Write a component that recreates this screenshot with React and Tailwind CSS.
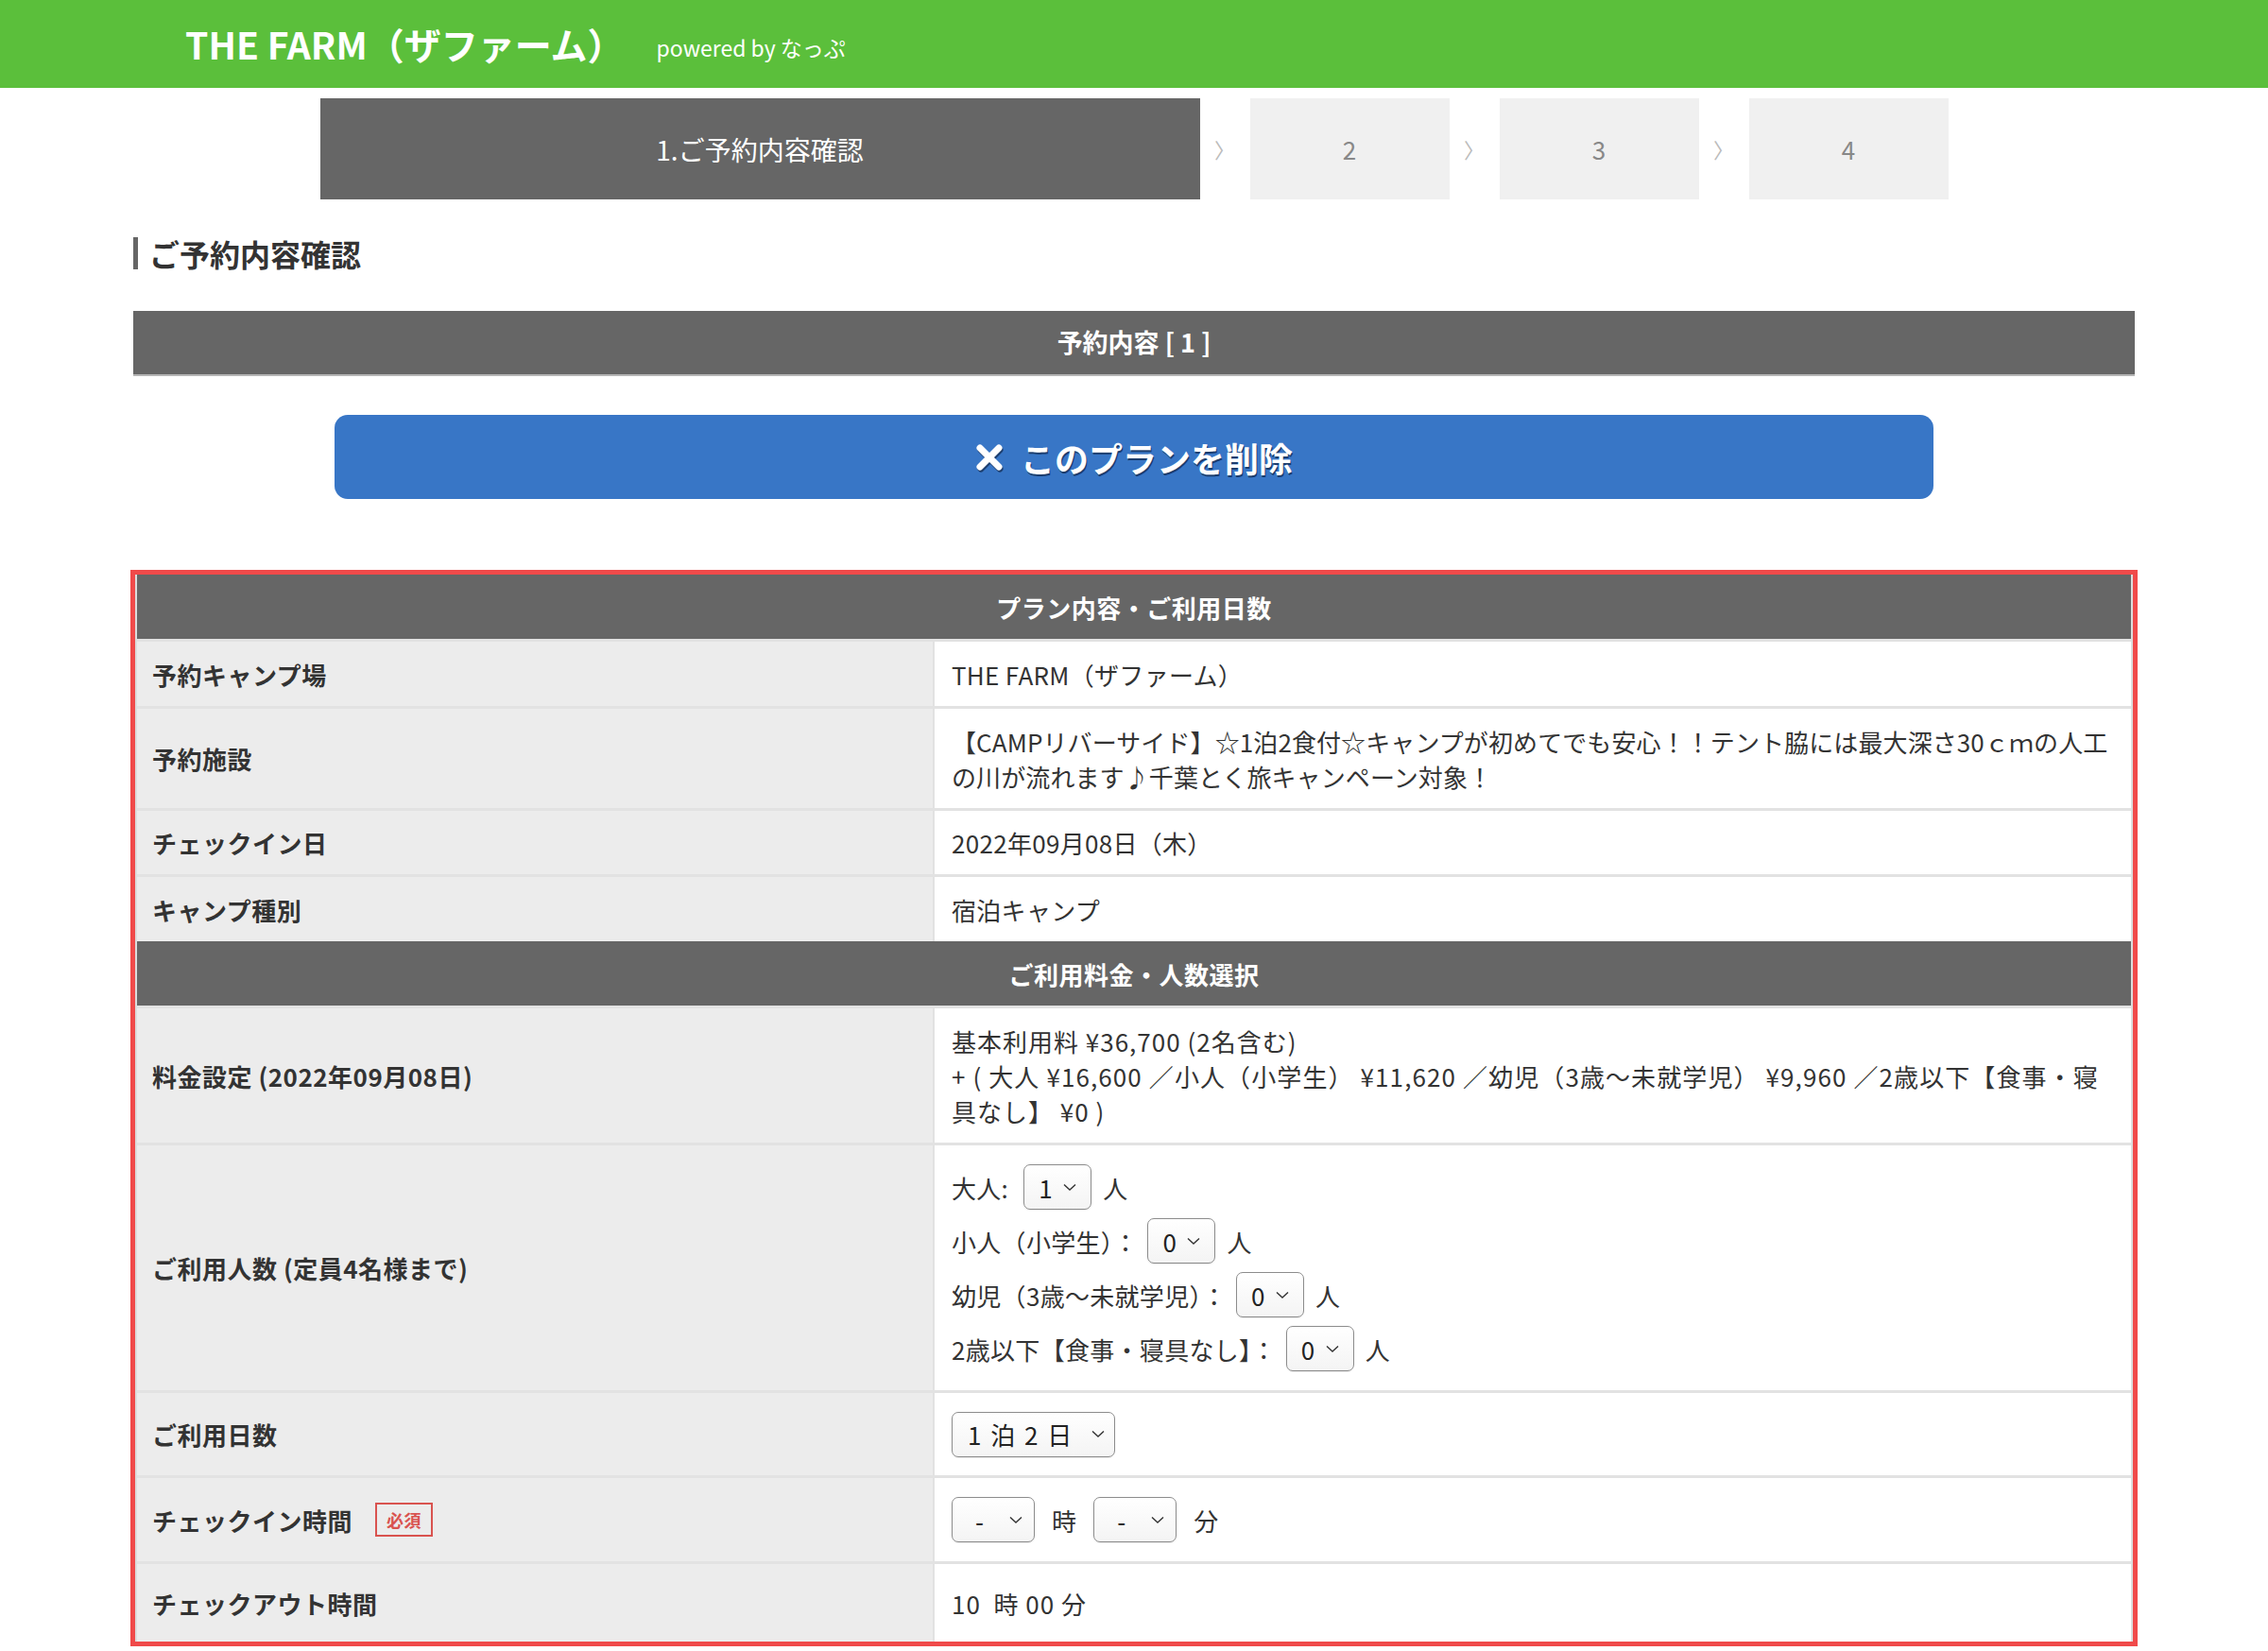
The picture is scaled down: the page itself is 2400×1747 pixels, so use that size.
import React from "react";

function Chevron() {
  return (
    <svg width="14" height="9" viewBox="0 0 14 9" className="shrink-0">
      <polyline points="1,1.5 7,7 13,1.5" fill="none" stroke="#333" strokeWidth="1.4" />
    </svg>
  );
}

function FakeSelect({ value, className = "" }) {
  return (
    <span
      className={`inline-flex items-center justify-between h-[48px] rounded-[7px] border-[1.5px] border-[#8c8c8c] bg-gradient-to-b from-white to-[#f4f4f4] text-[#222] shadow-[0_1px_1px_rgba(0,0,0,0.08)] ${className}`}
    >
      <span>{value}</span>
      <Chevron />
    </span>
  );
}

function SectionHead({ children }) {
  return (
    <div className="h-[68px] bg-[#666] flex items-center justify-center text-white text-[26px] font-bold tracking-[0.5px]">
      {children}
    </div>
  );
}

function Row({ label, height, children }) {
  return (
    <div
      className="grid grid-cols-[844px_1fr] border-t-[3px] border-[#e2e2e2]"
      style={{ height }}
    >
      <div className="bg-[#ececec] flex items-center px-[16px] text-[26px] font-bold text-[#333] tracking-[0.5px] border-r-[2px] border-[#e2e2e2]">
        {label}
      </div>
      <div className="bg-white flex flex-col justify-center px-[18px] text-[26px] leading-[37px] text-[#333] tracking-[0.3px]">
        {children}
      </div>
    </div>
  );
}

export default function App() {
  const steps = ["2", "3", "4"];

  return (
    <div className="min-h-[1747px] bg-white font-['Noto_Sans_CJK_JP','Liberation_Sans',sans-serif] text-[#333]">
      {/* header */}
      <div className="h-[93px] bg-[#5bbf3b] flex items-center pl-[196px]">
        <span className="text-white text-[39px] font-bold">THE FARM（ザファーム）</span>
        <span className="text-white text-[23px] ml-[34px] mt-[8px]">powered by なっぷ</span>
      </div>

      {/* steps */}
      <div className="mt-[11px] flex justify-center h-[107px]">
        <div className="w-[931px] bg-[#666] flex items-center justify-center text-white text-[28px]">
          1.ご予約内容確認
        </div>
        {steps.map((s) => (
          <React.Fragment key={s}>
            <div className="w-[53px] flex items-center justify-center text-[#bbb] text-[22px]">〉</div>
            <div className="w-[211px] bg-[#f0f0f0] flex items-center justify-center text-[#888] text-[26px]">
              {s}
            </div>
          </React.Fragment>
        ))}
      </div>

      <div className="w-[2118px] mx-auto">
        {/* heading */}
        <div className="mt-[40px] flex items-center">
          <div className="w-[5px] h-[34px] bg-[#666]" />
          <h2 className="ml-[12px] text-[32px] font-bold text-[#333] leading-none">ご予約内容確認</h2>
        </div>

        <div className="mt-[44px] h-[69px] bg-[#666] border-b-[2px] border-[#b5b5b5] flex items-center justify-center text-white text-[27px] font-bold">
          予約内容 [ 1 ]
        </div>

        <div className="mt-[41px] mx-auto w-[1692px] h-[89px] rounded-[14px] bg-[#3876c6] flex items-center justify-center gap-[18px] text-white text-[36px] font-bold [text-shadow:1px_2px_0_#1b3d6e]">
          <svg width="30" height="30" viewBox="0 0 30 30" className="drop-shadow-[1px_2px_0_#1b3d6e]">
            <path d="M5 5 L25 25 M25 5 L5 25" stroke="white" strokeWidth="7" strokeLinecap="round" />
          </svg>
          <span>このプランを削除</span>
        </div>

        {/* table */}
        <div className="mt-[75px] -mx-[3px] border-[5px] border-[#f04a4a]">
          <div className="border-x-[2px] border-[#dcdcdc]">
            <SectionHead>プラン内容・ご利用日数</SectionHead>
            <Row label="予約キャンプ場" height={71}>
              <div>THE FARM（ザファーム）</div>
            </Row>
            <Row label="予約施設" height={108}>
              <div className="whitespace-nowrap tracking-[0.1px]">
                【CAMPリバーサイド】☆1泊2食付☆キャンプが初めてでも安心！！テント脇には最大深さ30ｃｍの人工
              </div>
              <div className="whitespace-nowrap tracking-[0.1px]">の川が流れます♪千葉とく旅キャンペーン対象！</div>
            </Row>
            <Row label="チェックイン日" height={70}>
              <div>2022年09月08日（木）</div>
            </Row>
            <Row label="キャンプ種別" height={71}>
              <div>宿泊キャンプ</div>
            </Row>
            <SectionHead>ご利用料金・人数選択</SectionHead>
            <Row label="料金設定 (2022年09月08日)" height={145}>
              <div className="tracking-[1px]">基本利用料 ¥36,700 (2名含む)</div>
              <div className="tracking-[1.1px] whitespace-nowrap">
                + ( 大人 ¥16,600 ／小人（小学生） ¥11,620 ／幼児（3歳〜未就学児） ¥9,960 ／2歳以下【食事・寝
              </div>
              <div className="tracking-[1px]">具なし】 ¥0 )</div>
            </Row>
            <Row label="ご利用人数 (定員4名様まで)" height={262}>
              <div className="flex flex-col gap-[9px]">
                <div className="flex items-center">
                  <span>大人:</span>
                  <FakeSelect value="1" className="w-[72px] px-[15px] ml-[16px] mr-[12px]" />
                  <span>人</span>
                </div>
                <div className="flex items-center">
                  <span>小人（小学生）：</span>
                  <FakeSelect value="0" className="w-[72px] px-[15px] ml-[10px] mr-[12px]" />
                  <span>人</span>
                </div>
                <div className="flex items-center">
                  <span>幼児（3歳〜未就学児）：</span>
                  <FakeSelect value="0" className="w-[72px] px-[15px] ml-[10px] mr-[12px]" />
                  <span>人</span>
                </div>
                <div className="flex items-center">
                  <span>2歳以下【食事・寝具なし】：</span>
                  <FakeSelect value="0" className="w-[72px] px-[15px] ml-[10px] mr-[12px]" />
                  <span>人</span>
                </div>
              </div>
            </Row>
            <Row label="ご利用日数" height={90}>
              <div className="flex items-center">
                <FakeSelect value="1 泊 2 日" className="w-[173px] pl-[16px] pr-[10px] tracking-[2px]" />
              </div>
            </Row>
            <Row
              label={
                <span className="flex items-center">
                  チェックイン時間
                  <span className="ml-[24px] h-[36px] px-[10px] flex items-center border-[2px] border-[#d9534f] text-[#d9534f] text-[18px] font-bold">
                    必須
                  </span>
                </span>
              }
              height={91}
            >
              <div className="flex items-center">
                <FakeSelect value="-" className="w-[88px] pl-[24px] pr-[12px]" />
                <span className="mx-[18px]">時</span>
                <FakeSelect value="-" className="w-[88px] pl-[24px] pr-[12px]" />
                <span className="ml-[18px]">分</span>
              </div>
            </Row>
            <Row label="チェックアウト時間" height={85}>
              <div className="tracking-[1px]">10&nbsp;&nbsp;時 00 分</div>
            </Row>
          </div>
        </div>
      </div>
    </div>
  );
}
